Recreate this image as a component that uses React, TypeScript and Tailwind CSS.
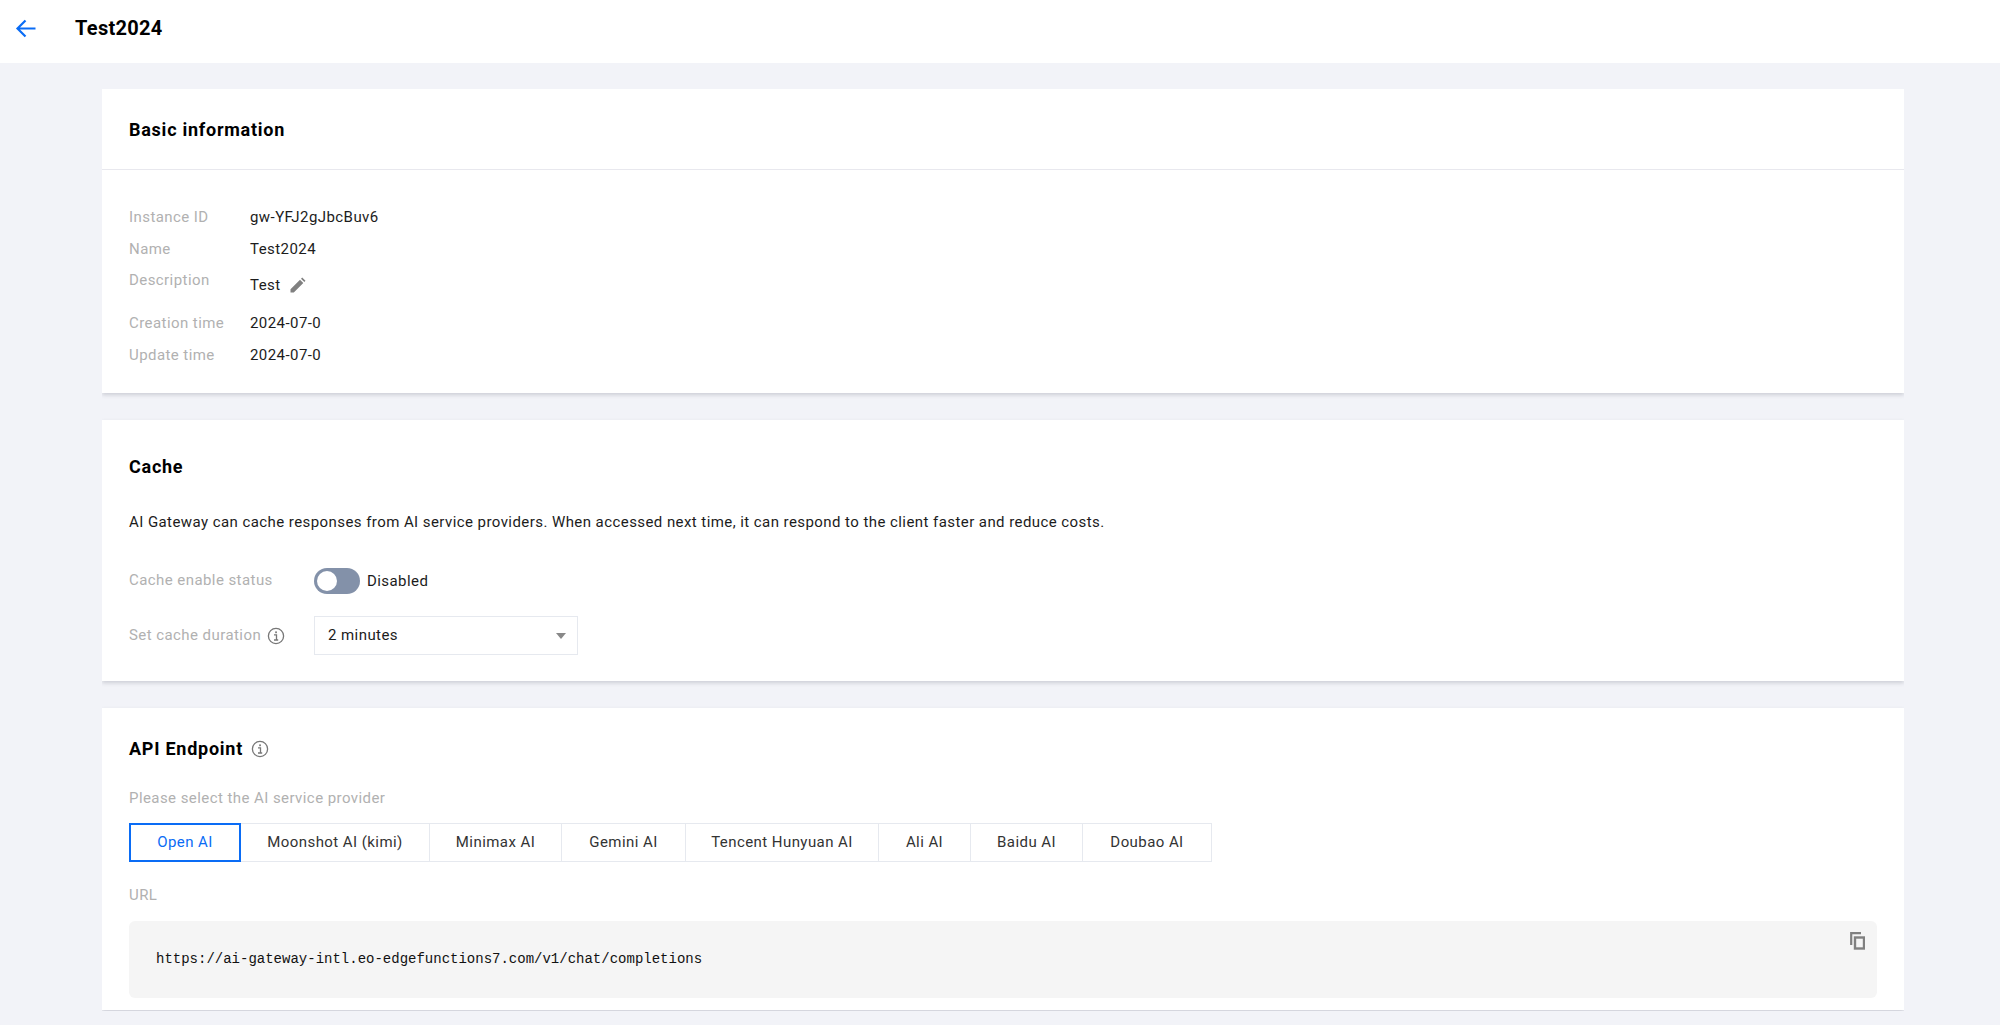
const providers = [
  { name: "Moonshot AI (kimi)", width: "w-[190px]" },
  { name: "Minimax AI", width: "w-[133px]" },
  { name: "Gemini AI", width: "w-[125px]" },
  { name: "Tencent Hunyuan AI", width: "w-[194px]" },
  { name: "Ali AI", width: "w-[93px]" },
  { name: "Baidu AI", width: "w-[113px]" },
  { name: "Doubao AI", width: "w-[130px]" },
];

function InfoIcon() {
  return (
    <svg width="18" height="18" viewBox="0 0 18 18" fill="none" className="shrink-0">
      <circle cx="9" cy="9" r="7.6" stroke="#777" strokeWidth="1.3" />
      <rect x="8.2" y="4.4" width="1.7" height="1.8" fill="#777" />
      <path d="M7 7.8h2.5v5M7 13h4.2" stroke="#777" strokeWidth="1.3" />
    </svg>
  );
}

function InfoRow({ label, value, tall }: { label: string; value: string; tall?: boolean }) {
  return (
    <div className={`flex items-center ${tall ? "h-[32px]" : "h-[31px]"}`}>
      <span className="w-[121px] text-[#b1b1b1]">{label}</span>
      <span className="text-[#1c1c1c]">{value}</span>
    </div>
  );
}

export default function App() {
  return (
    <div className="flex h-[1025px] flex-col overflow-hidden bg-[#f2f3f8] font-['Roboto',sans-serif] text-[15px] tracking-[0.43px] text-[#1c1c1c]">
      <header className="flex h-[63px] shrink-0 items-center bg-white pb-[7px]">
        <svg width="24" height="24" viewBox="0 0 24 24" fill="none" className="ml-[14px]">
          <path d="M21.5 12.5H4M11.5 4.5l-8 8 8 8" stroke="#0a6cf5" strokeWidth="2.2" />
        </svg>
        <h1 className="ml-[37px] text-xl font-bold tracking-[0.3px] text-black">Test2024</h1>
      </header>

      <main className="ml-[102px] mr-[96px] mt-[26px] flex h-[922px] flex-col gap-[27px] overflow-hidden">
        <section className="h-[304px] shrink-0 bg-white shadow-[0_2px_4px_rgba(54,58,80,0.2)]">
          <div className="flex h-[81px] items-center border-b border-[#e8e8ee] px-[27px] pt-[1px]">
            <h2 className="text-lg font-bold tracking-[0.75px] text-black">Basic information</h2>
          </div>
          <div className="px-[27px] pt-[32px]">
            <InfoRow label="Instance ID" value="gw-YFJ2gJbcBuv6" />
            <InfoRow label="Name" value="Test2024" tall />
            <div className="flex h-[43px] pt-[4px]">
              <span className="w-[121px] text-[#b1b1b1]">Description</span>
              <div className="flex h-fit items-center gap-[9px] pt-[5px]">
                <span>Test</span>
                <svg width="16" height="16" viewBox="0 0 16 16" fill="#808080">
                  <path d="M0.5 15.5v-3.3L10 2.7l3.3 3.3-9.5 9.5zM11 1.7l1.2-1.2 3.3 3.3-1.2 1.2z" />
                </svg>
              </div>
            </div>
            <InfoRow label="Creation time" value="2024-07-0" />
            <InfoRow label="Update time" value="2024-07-0" tall />
          </div>
        </section>

        <section className="h-[261px] shrink-0 bg-white px-[27px] pt-[35px] shadow-[0_2px_4px_rgba(54,58,80,0.2)]">
          <h2 className="text-lg font-bold leading-6 tracking-[0.75px] text-black">Cache</h2>
          <p className="mt-[33px] leading-5">
            AI Gateway can cache responses from AI service providers. When accessed next time, it
            can respond to the client faster and reduce costs.
          </p>
          <div className="mt-[36px] flex h-[26px] items-center">
            <span className="w-[185px] pb-[2px] text-[#b1b1b1]">Cache enable status</span>
            <div className="flex h-[26px] w-[46px] items-center rounded-full bg-[#8391a9] pl-[3px]">
              <span className="size-[20px] rounded-full bg-white" />
            </div>
            <span className="ml-[7px]">Disabled</span>
          </div>
          <div className="mt-[22px] flex h-[39px] items-center">
            <div className="flex w-[185px] items-center gap-[6px] text-[#b1b1b1]">
              <span>Set cache duration</span>
              <InfoIcon />
            </div>
            <div className="flex h-[39px] w-[264px] items-center justify-between border border-[#e6e9ef] pl-[13px] pr-[11px]">
              <span>2 minutes</span>
              <span className="size-0 border-x-[5px] border-t-[6px] border-x-transparent border-t-[#888]" />
            </div>
          </div>
        </section>

        <section className="h-[302px] shrink-0 bg-white px-[27px] pt-[29px] shadow-[0_2px_4px_rgba(54,58,80,0.2)]">
          <div className="flex h-6 items-center gap-[8px]">
            <h2 className="text-lg font-bold tracking-[0.75px] text-black">API Endpoint</h2>
            <InfoIcon />
          </div>
          <p className="mt-[27px] leading-5 text-[#b1b1b1]">Please select the AI service provider</p>
          <div className="mt-[15px] flex h-[39px]">
            <button className="z-10 w-[112px] border-2 border-[#0a6cf5] text-[#0a6cf5]">Open AI</button>
            {providers.map((provider) => (
              <button
                key={provider.name}
                className={`${provider.width} -ml-px border border-[#e6e9ef] text-[#333]`}
              >
                {provider.name}
              </button>
            ))}
          </div>
          <p className="mt-[23px] leading-5 text-[#b1b1b1]">URL</p>
          <div className="mt-[16px] flex h-[77px] items-start justify-between rounded-md bg-[#f5f5f5] pl-[27px] pr-[12px]">
            <code className="mt-[28px] font-['Liberation_Mono',monospace] text-sm leading-5 tracking-normal text-[#111]">
              https://ai-gateway-intl.eo-edgefunctions7.com/v1/chat/completions
            </code>
            <svg width="15" height="18" viewBox="0 0 15 18" fill="none" className="mt-[11px]">
              <path d="M11 1.2H1.2V13" stroke="#808080" strokeWidth="2.2" />
              <rect x="5" y="5.5" width="9" height="11" stroke="#808080" strokeWidth="2.4" />
            </svg>
          </div>
        </section>
      </main>
    </div>
  );
}
